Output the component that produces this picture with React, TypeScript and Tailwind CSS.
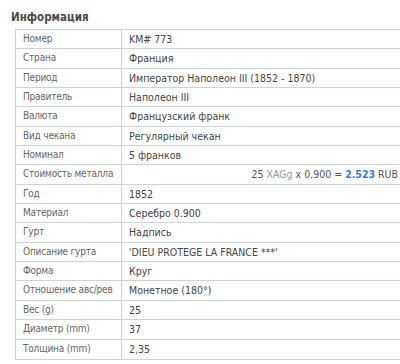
import React from 'react'

const rows: [string, React.ReactNode][] = [
  ['Номер', 'KM# 773'],
  ['Страна', 'Франция'],
  ['Период', 'Император Наполеон III (1852 - 1870)'],
  ['Правитель', 'Наполеон III'],
  ['Валюта', 'Французский франк'],
  ['Вид чекана', 'Регулярный чекан'],
  ['Номинал', '5 франков'],
  ['Стоимость металла', null],
  ['Год', '1852'],
  ['Материал', 'Серебро 0.900'],
  ['Гурт', 'Надпись'],
  ['Описание гурта', "'DIEU PROTEGE LA FRANCE ***'"],
  ['Форма', 'Круг'],
  ['Отношение авс/рев', 'Монетное (180°)'],
  ['Вес (g)', '25'],
  ['Диаметр (mm)', '37'],
  ['Толщина (mm)', '2,35'],
]

export default function App() {
  return (
    <div className="w-[400px] h-[364px] overflow-hidden bg-white font-['DejaVu_Sans_Condensed','DejaVu_Sans',sans-serif]">
      <h2 className="pl-[11px] pt-[11px] h-[29px] text-[11.5px] leading-[13px] font-bold text-[#4a4a4a]">
        Информация
      </h2>
      <div className="ml-[15px] w-[400px] border-t border-l border-b border-[#cbd3db]">
        {rows.map(([label, value]) => (
          <div key={label} className="flex h-[19.35px] border-b border-[#cbd3db] last:border-b-0 text-[10.5px] leading-[18px] whitespace-nowrap">
            <div className="w-[106px] shrink-0 border-r border-[#cbd3db] pl-[7px] text-[10px] tracking-[-0.2px] text-[#666]">{label}</div>
            {value === null ? (
              <div className="w-[276px] text-right text-[#555]">
                25 <span className="text-[#999]">XAGg</span> x 0,900 = <span className="font-bold text-[#3a78d6]">2.523</span> RUB
              </div>
            ) : (
              <div className="pl-[7px] text-[#444]">{value}</div>
            )}
          </div>
        ))}
      </div>
    </div>
  )
}
